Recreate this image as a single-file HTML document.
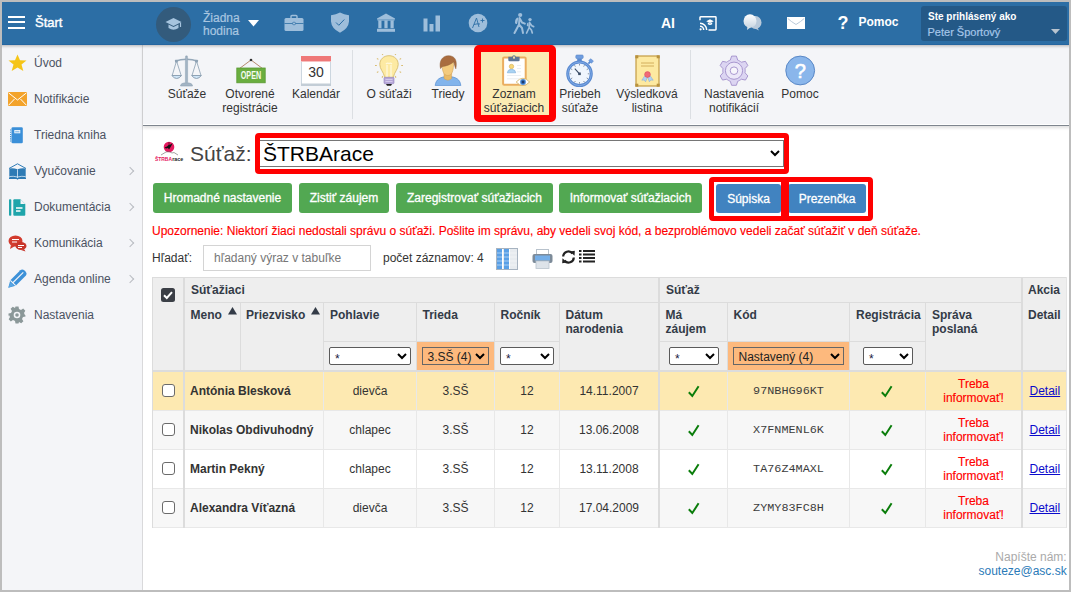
<!DOCTYPE html>
<html><head><meta charset="utf-8">
<style>
*{box-sizing:border-box;margin:0;padding:0}
html,body{width:1071px;height:592px;overflow:hidden;background:#fff;font-family:"Liberation Sans",sans-serif;position:relative}
.a{position:absolute}
#brd{position:absolute;left:0;top:0;width:1071px;height:592px;border:2px solid #bdbdbd;z-index:50;pointer-events:none}
#hdr{position:absolute;left:0;top:0;width:1071px;height:45px;background:#2c6ea5;border-bottom:1px solid #2566a0;box-shadow:0 1px 3px rgba(0,0,0,.28);z-index:5}
#side{position:absolute;left:0;top:45px;width:143px;height:547px;background:#f4f5f8;border-right:1px solid #d9d9db}
#tb{position:absolute;left:143px;top:45px;width:928px;height:81px;background:#f4f5f8;border-bottom:1px solid #7e858e;box-shadow:inset 0 -1px 0 #fff,0 2px 3px rgba(0,0,0,.13)}
.si{position:absolute;left:0;width:142px;height:36px;font-size:12px;color:#4b5262}
.si span{position:absolute;left:34px;top:11px}
.si svg{position:absolute;left:8px;top:9px}
.chev{position:absolute;left:127px;top:15px;width:6px;height:6px;border-right:1px solid #b9bcc2;border-top:1px solid #b9bcc2;transform:rotate(45deg)}
.ti{position:absolute;top:45px;height:80px;text-align:center;font-size:12px;color:#333;line-height:14px}
.ti .lbl{position:absolute;left:-10px;right:-10px;top:42px}
.ti svg{position:absolute;top:10px;left:50%;transform:translateX(-50%)}
.btn{position:absolute;top:183px;height:30px;border-radius:3px;color:#fff;font-size:12px;text-align:center;line-height:31px;white-space:nowrap;-webkit-text-stroke:0.3px #fff}
.g{background:#52a852}
.bl{background:#4183c0}
.red{position:absolute;border:5px solid #f00;border-radius:4px;z-index:20}
</style></head><body>
<div id="hdr">
  <div class="a" style="left:8px;top:16px;width:17px;height:2px;background:#fff"></div>
  <div class="a" style="left:8px;top:21px;width:17px;height:2px;background:#fff"></div>
  <div class="a" style="left:8px;top:27px;width:17px;height:2px;background:#fff"></div>
  <div class="a" style="left:35px;top:15px;font-size:13px;color:#fff;-webkit-text-stroke:0.4px #fff">Štart</div>
  <div class="a" style="left:156px;top:7px;width:35px;height:35px;border-radius:50%;background:#335b7c"></div>
  <svg class="a" style="left:165px;top:17px" width="17" height="15" viewBox="0 0 17 15"><path d="M8.5 1 L16.5 5 L8.5 9 L0.5 5 Z" fill="#a6c4de"/><path d="M3.5 7.5 V11 Q8.5 14.5 13.5 11 V7.5 L8.5 10 Z" fill="#a6c4de"/><path d="M15.5 5.5 V10" stroke="#a6c4de" stroke-width="1.2"/></svg>
  <div class="a" style="left:203px;top:11.5px;font-size:12px;line-height:13.7px;color:#a9c6e0;-webkit-text-stroke:0.2px #a9c6e0">Žiadna<br>hodina</div>
  <svg class="a" style="left:248px;top:19.5px" width="11" height="7" viewBox="0 0 11 7"><path d="M0 0H11L5.5 6.5Z" fill="#fff"/></svg>
  <!-- briefcase -->
  <svg class="a" style="left:284px;top:14px" width="20" height="18" viewBox="0 0 20 18"><path d="M7 4V2.5Q7 1.5 8 1.5H12Q13 1.5 13 2.5V4" fill="none" stroke="#9ebedb" stroke-width="1.4"/><rect x="0.5" y="4" width="19" height="13" rx="1.5" fill="#9ebedb"/><path d="M0.5 9.5H19.5" stroke="#2c6ea5" stroke-width="0.8"/><rect x="8.5" y="8.3" width="3" height="2.4" rx="1" fill="#9ebedb" stroke="#2c6ea5" stroke-width="0.7"/></svg>
  <!-- shield -->
  <svg class="a" style="left:330px;top:12px" width="20" height="21" viewBox="0 0 20 21"><path d="M10 0.6 Q14 2.8 19 3.2 V9.5 Q18.5 16.5 10 20.8 Q1.5 16.5 1 9.5 V3.2 Q6 2.8 10 0.6 Z" fill="#9ebedb"/><path d="M6 10.5 L8.8 13.3 L14.3 7.5" fill="none" stroke="#2c6ea5" stroke-width="1"/></svg>
  <!-- bank -->
  <svg class="a" style="left:376px;top:13px" width="20" height="19" viewBox="0 0 20 19"><path d="M10 0.6 L19 5.6 V6.6 H1 V5.6 Z" fill="#9ebedb"/><rect x="2.3" y="7.4" width="3.2" height="7.8" fill="#9ebedb"/><rect x="8.4" y="7.4" width="3.2" height="7.8" fill="#9ebedb"/><rect x="14.5" y="7.4" width="3.2" height="7.8" fill="#9ebedb"/><rect x="1.5" y="6.6" width="17" height="1" fill="#9ebedb"/><rect x="1" y="15.8" width="18" height="3" fill="#9ebedb"/></svg>
  <!-- chart -->
  <svg class="a" style="left:423px;top:15px" width="18" height="17" viewBox="0 0 18 17"><rect x="0.5" y="3.5" width="4" height="13" fill="#9ebedb"/><rect x="6.5" y="9" width="4" height="7.5" fill="#9ebedb"/><rect x="12.5" y="0.5" width="4.5" height="16" fill="#9ebedb"/></svg>
  <!-- A+ -->
  <svg class="a" style="left:468px;top:13px" width="20" height="20" viewBox="0 0 20 20"><circle cx="10" cy="10" r="9.3" fill="#9ebedb"/><path d="M4.5 15 L8.5 5 L11 14 M6 11.5 Q9 10.5 12 11" fill="none" stroke="#2c6ea5" stroke-width="0.9"/><path d="M12.5 7.5H16.5M14.5 5.5V9.5" stroke="#2c6ea5" stroke-width="0.9"/></svg>
  <!-- walking -->
  <svg class="a" style="left:512px;top:12px" width="23" height="22" viewBox="0 0 23 22"><circle cx="8.2" cy="3" r="2.1" fill="#9ebedb"/><path d="M7.5 6 L7 12.5 L2.5 21 M7 12.5 L10 16 L11 21 M7.8 6.5 L10 10.5 L12.8 11.6" fill="none" stroke="#9ebedb" stroke-width="2" stroke-linecap="round" stroke-linejoin="round"/><path d="M6 5.6 Q2.8 6.2 3 11 Q3.5 12.3 5 12 L6.3 6.5Z" fill="#9ebedb"/><circle cx="18" cy="7.6" r="1.7" fill="#9ebedb"/><path d="M17.6 10.3 L17.2 15.5 L14.6 21 M17.2 15.5 L19.4 18 L20.3 21 M17.8 11 L19.8 13.8 L21.6 14.6" fill="none" stroke="#9ebedb" stroke-width="1.7" stroke-linecap="round" stroke-linejoin="round"/><path d="M16.3 10.3 Q14.5 11 14.8 14 L16.8 14.5Z" fill="#9ebedb"/></svg>
  <div class="a" style="left:661px;top:15px;font-size:14px;font-weight:bold;color:#fff">AI</div>
  <!-- cast -->
  <svg class="a" style="left:699px;top:16px" width="18" height="15" viewBox="0 0 18 15"><path d="M1 4.2 V1.5 Q1 0.8 1.7 0.8 H16.3 Q17 0.8 17 1.5 V13.3 Q17 14 16.3 14 H9.5" fill="none" stroke="#fff" stroke-width="1.5"/><path d="M1 7.3 A6.7 6.7 0 0 1 7.7 14 M1 10.3 A3.7 3.7 0 0 1 4.7 14" fill="none" stroke="#fff" stroke-width="1.5"/><circle cx="1.6" cy="13.3" r="1.1" fill="#fff"/><path d="M11 3.3 L14.8 5.2 L11 7.1 L7.2 5.2Z M8.8 6.5 V8.3 Q11 9.8 13.2 8.3 V6.5 L11 7.6Z" fill="#fff"/></svg>
  <!-- chat -->
  <svg class="a" style="left:743px;top:14px" width="19" height="17" viewBox="0 0 19 17"><defs><linearGradient id="cg" x1="0" y1="0" x2="0" y2="1"><stop offset="0" stop-color="#fff"/><stop offset="1" stop-color="#c9d6e2"/></linearGradient></defs><ellipse cx="12.5" cy="8.5" rx="6" ry="6.5" fill="#b9cadb"/><path d="M14 13 L16 16.5 L12 14.5Z" fill="#b9cadb"/><ellipse cx="7" cy="7" rx="6.5" ry="6.8" fill="url(#cg)"/><path d="M4.5 12 L4 16 L8 13Z" fill="#d6e1ea"/></svg>
  <!-- envelope -->
  <svg class="a" style="left:787px;top:17px" width="18" height="12" viewBox="0 0 18 12"><rect x="0" y="0" width="18" height="12" fill="#fff"/><path d="M0.8 1.5 Q4 4.5 9 7.5 Q14 4.5 17.2 1.5" fill="none" stroke="#a9bdd0" stroke-width="0.8"/></svg>
  <div class="a" style="left:837.5px;top:13px;font-size:18px;font-weight:bold;color:#fff">?</div>
  <div class="a" style="left:858.5px;top:15px;font-size:12px;font-weight:bold;color:#fff">Pomoc</div>
  <div class="a" style="left:921px;top:6px;width:146px;height:35px;border-radius:3px;background:#245987"></div>
  <div class="a" style="left:928px;top:11px;font-size:10px;font-weight:bold;color:#fff">Ste prihlásený ako</div>
  <div class="a" style="left:927.5px;top:25.5px;font-size:11px;color:#a6c6e8;-webkit-text-stroke:0.2px #a6c6e8">Peter Športový</div>
  <svg class="a" style="left:1051px;top:29px" width="9" height="6" viewBox="0 0 9 6"><path d="M0 0H9L4.5 5Z" fill="#b8c4cf"/></svg>
</div>
<div id="side">
  <div class="si" style="top:0px"><svg width="19" height="18" viewBox="0 0 19 18"><path d="M9.5 0.5 L12 6.3 L18.5 6.6 L13.5 10.6 L15.3 17 L9.5 13.4 L3.7 17 L5.5 10.6 L0.5 6.6 L7 6.3Z" fill="#f5c518"/></svg><span>Úvod</span></div>
  <div class="si" style="top:36px"><svg width="19" height="14" viewBox="0 0 19 14" style="top:11px"><rect x="0" y="0" width="19" height="14" fill="#f3a32b"/><path d="M0.5 0.8 L9.5 8 L18.5 0.8 M0.5 13.3 L6.5 7 M18.5 13.3 L12.5 7" fill="none" stroke="#fff" stroke-width="1"/></svg><span>Notifikácie</span></div>
  <div class="si" style="top:72px"><svg width="14" height="17" viewBox="0 0 14 17" style="left:10px;top:10px"><rect x="1.5" y="0.3" width="11.3" height="16" rx="1.3" fill="#3a8fd8"/><rect x="4.3" y="3" width="6" height="3.3" fill="#fff" opacity=".92"/><rect x="5.2" y="3.9" width="4.2" height="1.5" fill="#3a8fd8" opacity=".5"/><path d="M0.6 2.5V15" stroke="#3a8fd8" stroke-width="1.1" stroke-dasharray="1.1 1.1"/></svg><span>Triedna kniha</span></div>
  <div class="si" style="top:108px"><svg width="19" height="17" viewBox="0 0 19 17" style="top:10px"><path d="M9.5 0.8 L1 5.5 M9.5 0.8 L18 5.5" stroke="#2e7bb5" stroke-width="1" fill="none"/><path d="M1.3 5.5 Q5 4.6 9.5 6.2 Q14 4.6 17.7 5.5 V15 H1.3Z" fill="#2e7bb5"/><path d="M9.5 6.3 V15.5" stroke="#cfe3f3" stroke-width=".9"/><path d="M1.3 13.6 Q5 12.8 9.5 14 Q14 12.8 17.7 13.6" stroke="#d9eaf6" stroke-width=".8" fill="none"/><path d="M1 15 H18 V16 H10.5 L9.5 16.8 L8.5 16 H1Z" fill="#2e7bb5"/></svg><span>Vyučovanie</span><div class="chev"></div></div>
  <div class="si" style="top:144px"><svg width="17" height="17" viewBox="0 0 17 17" style="left:9px;top:10px"><rect x="0" y="0.3" width="2.3" height="16.4" rx=".8" fill="#1fa5ab"/><path d="M4.3 1.3 Q4.3 0.3 5.3 0.3 H11.5 L16.3 5 V15.7 Q16.3 16.7 15.3 16.7 H5.3 Q4.3 16.7 4.3 15.7Z" fill="#1fa5ab"/><path d="M11.5 0.3 V5 H16.3Z" fill="#f4f5f8"/><path d="M7 9H13.5M7 12H11.5" stroke="#fff" stroke-width="1.3"/></svg><span>Dokumentácia</span><div class="chev"></div></div>
  <div class="si" style="top:180px"><svg width="19" height="17" viewBox="0 0 19 17" style="top:10px"><ellipse cx="7.5" cy="6" rx="7" ry="5.5" fill="#d23b2e"/><path d="M3 10 L2 14 L7 11Z" fill="#d23b2e"/><ellipse cx="13" cy="11" rx="5.5" ry="4" fill="#c8352a"/><path d="M16 14 L17.5 16.5 L13 15Z" fill="#c8352a"/><path d="M4 4.5H11M4 7H9" stroke="#fff" stroke-width="1.2"/><path d="M10 10.5H16M10 12.5H14" stroke="#fff" stroke-width="1"/></svg><span>Komunikácia</span><div class="chev"></div></div>
  <div class="si" style="top:216px"><svg width="19" height="19" viewBox="0 0 19 19" style="top:8px"><path d="M0.3 18.7 L2.3 11.3 L12.3 1.3 Q14.3 -0.5 16.5 1.5 L17.5 2.5 Q19.5 4.7 17.7 6.7 L7.7 16.7Z" fill="#3d91d8"/><path d="M4.6 14 L15.3 3.3 M2.3 11.3 L7.7 16.7" stroke="#f4f5f8" stroke-width="1.1"/><path d="M0.3 18.7 L2.6 13.2 L5.8 16.4Z" fill="#5aa6e3"/></svg><span>Agenda online</span><div class="chev"></div></div>
  <div class="si" style="top:252px"><svg width="18" height="18" viewBox="0 0 18 18"><path d="M7.5 0.5H10.5L11 3 L13 4 L15.2 2.6 L17.3 4.8 L16 7 L16.9 9 L17.5 9.5V10.5 L15 11 L14 13 L15.4 15.2 L13.2 17.3 L11 16 L10.5 17.5H7.5L7 15 L5 14 L2.8 15.4 L0.7 13.2 L2 11 L1 9 L0.5 10.5V7.5 L3 7 L4 5 L2.6 2.8 L4.8 0.7 L7 2Z" fill="#8b9899"/><circle cx="9" cy="9" r="3.3" fill="#f4f5f8"/><circle cx="9" cy="9" r="1.8" fill="#8b9899"/></svg><span>Nastavenia</span></div>
</div>
<div id="tb"></div>
<div class="a" style="left:352px;top:50px;width:1px;height:69px;background:#dcdfe3"></div>
<div class="a" style="left:690px;top:50px;width:1px;height:69px;background:#dcdfe3"></div>
<div class="a" style="left:481px;top:52px;width:68px;height:63px;background:#fcebb3"></div>
<!-- Sutaze scales -->
<svg class="a" style="left:171px;top:55px" width="32" height="32" viewBox="0 0 32 32">
 <path d="M5.5 6 L1.2 20.5 M5.5 6 L10.2 20.5 M25.5 6 L21 20.5 M25.5 6 L30 20.5" stroke="#95a8b9" stroke-width=".9" fill="none"/>
 <path d="M0.8 20.5 Q5.7 26.5 10.6 20.5Z" fill="#cfe5f7" stroke="#8ea2b4" stroke-width="1"/>
 <path d="M20.6 20.5 Q25.5 26.5 30.4 20.5Z" fill="#cfe5f7" stroke="#8ea2b4" stroke-width="1"/>
 <path d="M4 6.2 Q15.5 2.2 27 6.2" stroke="#95a8b9" stroke-width="1.5" fill="none"/>
 <rect x="4" y="4.8" width="2.8" height="2.8" rx=".5" fill="#8ea2b4"/><rect x="24" y="4.8" width="2.8" height="2.8" rx=".5" fill="#8ea2b4"/>
 <circle cx="15.5" cy="1.6" r="1.2" fill="#95a8b9"/>
 <path d="M14.4 2.5 H16.6 V27.5 H14.4Z" fill="#a3b4c4" stroke="#8ea2b4" stroke-width=".5"/>
 <path d="M9.5 31 Q9.5 27.8 15.5 27.8 Q21.5 27.8 21.5 31Z" fill="#a3b4c4" stroke="#8ea2b4" stroke-width=".6"/>
</svg>
<!-- OPEN sign -->
<svg class="a" style="left:236px;top:58px" width="30" height="26" viewBox="0 0 30 26">
 <path d="M3.5 10.5 L15 2 L26.5 10.5" stroke="#b58a6e" stroke-width="1" fill="none"/>
 <circle cx="15" cy="2" r="1.3" fill="#333"/>
 <rect x="0.8" y="10" width="28.4" height="14.8" fill="#6aae3f" stroke="#5a9a33" stroke-width=".8"/>
 <text x="15" y="21" text-anchor="middle" font-family="Liberation Sans" font-weight="bold" font-size="9" fill="#f4fbef" textLength="20.5" lengthAdjust="spacingAndGlyphs" transform="translate(0,-3.2) scale(1,1.15)">OPEN</text>
</svg>
<!-- calendar -->
<svg class="a" style="left:301px;top:56px" width="30" height="30" viewBox="0 0 30 30">
 <rect x="0.5" y="0.5" width="29" height="29" fill="#fff" stroke="#ccd6df" stroke-width="1"/>
 <rect x="0" y="0" width="30" height="5" fill="#ef7878"/>
 <rect x="0" y="5" width="30" height="1" fill="#f6c0c0"/>
 <rect x="0" y="27.5" width="30" height="2.5" fill="#c3cdd6"/>
 <text x="15" y="20.5" text-anchor="middle" font-family="Liberation Sans" font-size="14" fill="#333">30</text>
</svg>
<!-- bulb -->
<svg class="a" style="left:374px;top:54px" width="30" height="33" viewBox="0 0 30 33">
 <path d="M2.8 11.5L1.0 11.5 M27.2 11.5L29.0 11.5 M4.4 5.4L2.9 4.5 M25.6 5.4L27.1 4.5 M4.4 17.6L2.9 18.5 M25.6 17.6L27.1 18.5 M8.9 0.9L8.0 -0.6 M21.1 0.9L22.0 -0.6 M8.9 22.1L8.0 23.6 M21.1 22.1L22.0 23.6" stroke="#d9bd72" stroke-width="1.1"/>
 <path d="M15 1.7 C20.5 1.7 24.2 5.5 24.2 10.5 C24.2 15 20.5 18 19.5 22.5 V23.3 H10.5 V22.5 C9.5 18 5.8 15 5.8 10.5 C5.8 5.5 9.5 1.7 15 1.7Z" fill="#fdeaa3" stroke="#d7bd6c" stroke-width=".9"/>
 <path d="M13 23 V11 M17 23 V11 M12 10 Q13.5 8.5 15 9.5 Q16.5 8.5 18 10" stroke="#fff8dc" stroke-width="1.3" fill="none"/>
 <rect x="10" y="23.3" width="10" height="6.5" rx="1" fill="#b6a7d8" stroke="#9485bf" stroke-width=".6"/>
 <path d="M11.5 25.5H18.5M11.5 27.5H18.5" stroke="#ddd3f1" stroke-width=".8"/>
 <path d="M12 30 H18 L17 31.8 H13Z" fill="#222"/>
</svg>
<!-- person -->
<svg class="a" style="left:434px;top:55px" width="28" height="31" viewBox="0 0 28 31">
 <path d="M1.2 30.6 C1.8 24.5 6 21.6 14 21.6 C22 21.6 26.2 24.5 26.8 30.6Z" fill="#82b4ec" stroke="#6196d4" stroke-width=".8"/>
 <path d="M10 18 V23.5 Q14 26.8 17.6 23.5 V18Z" fill="#e9bb68" stroke="#cf9f55" stroke-width=".5"/>
 <path d="M8 6 C7.8 16 9.5 20.5 13.8 20.5 C18 20.5 19.8 16 19.6 6Z" fill="#f4cb7e" stroke="#d3a55c" stroke-width=".6"/>
 <path d="M6.5 13.5 C5 7 7.5 0.8 14.5 0.7 C21 0.8 23.5 5.5 21.8 13.8 C21 12 20.3 9 19.8 6.8 C17 9.5 12.5 11 8.2 11.6 C7.6 12.2 7 12.8 6.5 13.5Z" fill="#a96c3f" stroke="#8d5a33" stroke-width=".5"/>
</svg>
<!-- clipboard -->
<svg class="a" style="left:501px;top:55px" width="30" height="33" viewBox="0 0 30 33">
 <rect x="2.1" y="2.6" width="22.6" height="27.2" rx="1" fill="#fff" stroke="#eaae60" stroke-width="2"/>
 <path d="M7.3 1.8 H18.6 V5 Q18.6 6.2 17.4 6.2 H8.5 Q7.3 6.2 7.3 5Z" fill="#5d7596"/>
 <circle cx="13" cy="2" r="1.8" fill="#5d7596"/><ellipse cx="13" cy="2.6" rx="0.9" ry="1.3" fill="#f8e6a6"/>
 <circle cx="10.5" cy="11.5" r="2.2" fill="#f7d879" stroke="#d3ab4d" stroke-width=".6"/>
 <path d="M6.3 17.8 Q6.5 14.3 10.5 14.3 Q14.5 14.3 14.7 17.8Z" fill="#a9d3f3" stroke="#79a9d8" stroke-width=".6"/>
 <path d="M16 10.5H20M16 13.5H20M16 16.8H20M6 20.5H20M6 23.8H18" stroke="#e8ecf0" stroke-width=".9"/>
 <path d="M15.2 27 Q22 19.5 28.6 27 Q22 34.2 15.2 27Z" fill="#fff" stroke="#d2b46c" stroke-width=".9"/>
 <circle cx="22" cy="27" r="2.9" fill="#4f8ed8"/><circle cx="22" cy="27" r="1.9" fill="#2a5fa8"/><circle cx="22" cy="27" r="1" fill="#1b2f55"/>
</svg>
<!-- stopwatch -->
<svg class="a" style="left:565px;top:54px" width="30" height="34" viewBox="0 0 30 34">
 <rect x="10.8" y="1" width="7.4" height="3.6" rx="1" fill="#6f9de0" stroke="#5a88c8" stroke-width=".6"/>
 <rect x="12.2" y="4.4" width="4.6" height="2.6" fill="#5a8ad0"/>
 <g transform="rotate(45 25.5 7.5)"><rect x="23.6" y="5.2" width="3.8" height="3" rx=".5" fill="#6f9de0" stroke="#5a88c8" stroke-width=".5"/><rect x="24.5" y="8" width="2" height="2.5" fill="#5a8ad0"/></g>
 <circle cx="14.5" cy="19.8" r="11.8" fill="#f0f6fd" stroke="#5a8ad0" stroke-width="3"/>
 <circle cx="14.5" cy="19.8" r="11.8" fill="none" stroke="#7ea9e6" stroke-width="1"/>
 <path d="M14.50 11.50L14.50 9.90 M18.65 12.61L19.45 11.23 M21.69 15.65L23.07 14.85 M22.80 19.80L24.40 19.80 M21.69 23.95L23.07 24.75 M18.65 26.99L19.45 28.37 M14.50 28.10L14.50 29.70 M10.35 26.99L9.55 28.37 M7.31 23.95L5.93 24.75 M6.20 19.80L4.60 19.80 M7.31 15.65L5.93 14.85 M10.35 12.61L9.55 11.23" stroke="#7a8898" stroke-width=".9"/>
 <path d="M14.5 19.8 L9.8 14.6" stroke="#3a4d66" stroke-width="1.1"/>
 <rect x="13.2" y="18.5" width="2.6" height="2.6" fill="#3a4d66"/>
</svg>
<!-- certificate -->
<svg class="a" style="left:634.5px;top:55px" width="25" height="32" viewBox="0 0 25 32">
 <rect x="1" y="1" width="23" height="30" fill="#fde9a1" stroke="#c8a24e" stroke-width="1.3"/>
 <rect x="0.3" y="0.3" width="3" height="3" fill="#b8923e"/><rect x="21.7" y="0.3" width="3" height="3" fill="#b8923e"/><rect x="0.3" y="28.7" width="3" height="3" fill="#b8923e"/><rect x="21.7" y="28.7" width="3" height="3" fill="#b8923e"/>
 <path d="M6 8H19M6 11H19" stroke="#d3ae5c" stroke-width="1"/>
 <path d="M10 20.5 L6.8 25.2 L9.2 25 L10.6 26.8 L12.5 22Z M15 20.5 L18.2 25.2 L15.8 25 L14.4 26.8 L12.5 22Z" fill="#b3d2f2" stroke="#7aa7d8" stroke-width=".5"/>
 <circle cx="12.5" cy="19.5" r="2.9" fill="#f06a78" stroke="#d44b5a" stroke-width=".5"/>
</svg>
<!-- gear -->
<svg class="a" style="left:719px;top:55px" width="30" height="32" viewBox="0 0 30 32">
 <path d="M11.27 5.14 L12.61 1.09 L17.39 1.09 L18.73 5.14 L19.37 5.39 L19.99 5.67 L20.60 6.00 L21.18 6.36 L21.75 6.76 L22.28 7.19 L26.45 6.33 L28.84 10.47 L26.01 13.65 L26.12 14.33 L26.18 15.01 L26.20 15.70 L26.18 16.39 L26.12 17.07 L26.01 17.75 L28.84 20.93 L26.45 25.07 L22.28 24.21 L21.75 24.64 L21.18 25.04 L20.60 25.40 L19.99 25.73 L19.37 26.01 L18.73 26.26 L17.39 30.31 L12.61 30.31 L11.27 26.26 L10.63 26.01 L10.01 25.73 L9.40 25.40 L8.82 25.04 L8.25 24.64 L7.72 24.21 L3.55 25.07 L1.16 20.93 L3.99 17.75 L3.88 17.07 L3.82 16.39 L3.80 15.70 L3.82 15.01 L3.88 14.33 L3.99 13.65 L1.16 10.47 L3.55 6.33 L7.72 7.19 L8.25 6.76 L8.82 6.36 L9.40 6.00 L10.01 5.67 L10.63 5.39Z" fill="#dcd5f2" stroke="#a28fcb" stroke-width=".9" stroke-linejoin="round"/>
 <circle cx="15" cy="15.7" r="8.6" fill="#ece8f8" stroke="#a28fcb" stroke-width=".9"/>
 <circle cx="15" cy="15.7" r="3.8" fill="#f7f6fb" stroke="#a28fcb" stroke-width=".9"/>
</svg>
<!-- help -->
<svg class="a" style="left:785px;top:55px" width="31" height="31" viewBox="0 0 31 31">
 <circle cx="15.2" cy="15.5" r="14.4" fill="#8ab6eb" stroke="#5a88c6" stroke-width="1"/>
 <text x="15.3" y="22.5" text-anchor="middle" font-family="Liberation Sans" font-size="20" fill="#fff" stroke="#fff" stroke-width=".6">?</text>
</svg>
<div class="ti" style="left:157px;width:60px"><div class="lbl">Súťaže</div></div>
<div class="ti" style="left:220px;width:60px"><div class="lbl">Otvorené<br>registrácie</div></div>
<div class="ti" style="left:286px;width:60px"><div class="lbl">Kalendár</div></div>
<div class="ti" style="left:359px;width:60px"><div class="lbl">O súťaži</div></div>
<div class="ti" style="left:418px;width:60px"><div class="lbl">Triedy</div></div>
<div class="ti" style="left:484px;width:60px"><div class="lbl">Zoznam<br>súťažiacich</div></div>
<div class="ti" style="left:550px;width:60px"><div class="lbl">Priebeh<br>súťaže</div></div>
<div class="ti" style="left:617px;width:60px"><div class="lbl">Výsledková<br>listina</div></div>
<div class="ti" style="left:704px;width:60px"><div class="lbl">Nastavenia<br>notifikácií</div></div>
<div class="ti" style="left:770px;width:60px"><div class="lbl">Pomoc</div></div>
<div class="red" style="left:474px;top:45px;width:82px;height:77px;border-width:7px 7px 7px 7px;border-radius:5px"></div>
<!-- MAIN -->
<svg class="a" style="left:153px;top:140px" width="32" height="22" viewBox="0 0 32 22">
 <circle cx="16" cy="7" r="5.3" fill="#e5195f"/>
 <path d="M11.5 7.5 L14 6.5 L15.5 5 L17.5 4.5 L19.5 3 L18.5 5.5 L17 8 L16 9.5 L15 8 L13 8.5Z" fill="#111"/>
 <path d="M16 2 V5" stroke="#111" stroke-width=".5"/>
 <path d="M8 15 L13 12 L16 11.5 L19 13 L21 12.5 L25 15" stroke="#666" stroke-width=".6" fill="none"/>
 <text x="2" y="20.5" font-family="Liberation Sans" font-weight="bold" font-size="5" fill="#e5195f" textLength="17" lengthAdjust="spacingAndGlyphs">ŠTRBA</text>
 <text x="19.2" y="20.5" font-family="Liberation Sans" font-weight="bold" font-size="5" fill="#222" textLength="11" lengthAdjust="spacingAndGlyphs">race</text>
</svg>
<div class="a" style="left:190px;top:142px;font-size:21px;color:#444">Súťaž:</div>
<div class="a" style="left:257px;top:140px;width:527px;height:27px;border:1px solid #767676;background:#fff"></div>
<div class="a" style="left:263px;top:142px;font-size:21px;color:#000">ŠTRBArace</div>
<svg class="a" style="left:770px;top:150px" width="10" height="7" viewBox="0 0 10 7"><path d="M1 1 L5 5 L9 1" stroke="#000" stroke-width="2" fill="none"/></svg>
<div class="red" style="left:255px;top:133px;width:534px;height:41px"></div>

<div class="btn g" style="left:153px;width:139px">Hromadné nastavenie</div>
<div class="btn g" style="left:299px;width:90px">Zistiť záujem</div>
<div class="btn g" style="left:396px;width:157px">Zaregistrovať súťažiacich</div>
<div class="btn g" style="left:559px;width:143px">Informovať súťažiacich</div>
<div class="btn bl" style="left:716px;top:184px;width:65px;height:29px;line-height:31px">Súpiska</div>
<div class="btn bl" style="left:788px;top:184px;width:78px;height:29px;line-height:31px">Prezenčka</div>
<div class="red" style="left:709px;top:177px;width:164px;height:44px"></div>
<div class="a" style="left:781px;top:177px;width:7.5px;height:44px;background:#f00;z-index:21"></div>

<div class="a" style="left:152px;top:224px;font-size:12px;color:#f00;-webkit-text-stroke:0.15px #f00">Upozornenie: Niektorí žiaci nedostali správu o súťaži. Pošlite im správu, aby vedeli svoj kód, a bezproblémovo vedeli začať súťažiť v deň súťaže.</div>
<div class="a" style="left:152px;top:251px;font-size:12px;color:#333">Hľadať:</div>
<div class="a" style="left:203px;top:245px;width:168px;height:26px;border:1px solid #d4d4d4;background:#fff"></div>
<div class="a" style="left:214px;top:251px;font-size:12px;color:#777">hľadaný výraz v tabuľke</div>
<div class="a" style="left:383px;top:251px;font-size:12px;color:#333">počet záznamov: 4</div>
<svg class="a" style="left:496px;top:248px" width="22" height="22" viewBox="0 0 22 22">
 <rect x="0.5" y="0.5" width="21" height="21" fill="#e7ebef" stroke="#a7b3c0" stroke-width="1"/>
 <rect x="1" y="1" width="5" height="20" fill="#5aa0e6"/>
 <rect x="8" y="1" width="5" height="20" fill="#5aa0e6"/>
 <path d="M1 5H21M1 9H21M1 13H21M1 17H21" stroke="#fff" stroke-width=".7" opacity=".7"/>
 <path d="M6.5 1V21M13.5 1V21" stroke="#fff" stroke-width="1"/>
</svg>
<svg class="a" style="left:532px;top:249px" width="21" height="20" viewBox="0 0 21 20">
 <rect x="4.5" y="0.5" width="12" height="5" fill="#fff" stroke="#b8c2cc" stroke-width="1"/>
 <rect x="0.5" y="5" width="20" height="9" rx="2" fill="#7d8b99"/>
 <rect x="3" y="6.5" width="15" height="5" fill="#74aee8"/>
 <rect x="4" y="12" width="13" height="7.5" fill="#dde3e9" stroke="#b8c2cc" stroke-width=".8"/>
</svg>
<svg class="a" style="left:561px;top:250px" width="15" height="14" viewBox="0 0 15 14">
 <path d="M2.2 6.5 A5.2 5.2 0 0 1 11.5 3.5" stroke="#222" stroke-width="2.2" fill="none"/>
 <path d="M9 1.5 L13.8 0.8 L13.5 5.8Z" fill="#222"/>
 <path d="M12.8 7.5 A5.2 5.2 0 0 1 3.5 10.5" stroke="#222" stroke-width="2.2" fill="none"/>
 <path d="M6 12.5 L1.2 13.2 L1.5 8.2Z" fill="#222"/>
</svg>
<svg class="a" style="left:579px;top:249px" width="16" height="14" viewBox="0 0 16 14">
 <rect x="0" y="1" width="2.5" height="2" fill="#222"/><rect x="4" y="1" width="12" height="2" fill="#222"/>
 <rect x="0" y="4.5" width="2.5" height="2" fill="#222"/><rect x="4" y="4.5" width="12" height="2" fill="#222"/>
 <rect x="0" y="8" width="2.5" height="2" fill="#222"/><rect x="4" y="8" width="12" height="2" fill="#222"/>
 <rect x="0" y="11.5" width="2.5" height="2" fill="#222"/><rect x="4" y="11.5" width="12" height="2" fill="#222"/>
</svg>
<!-- TABLE -->
<div class="a" style="left:152px;top:277px;width:915px;height:95px;background:#eeeeee;"></div>
<div class="a" style="left:152px;top:277px;width:915px;height:1px;background:#dcdcdc;"></div>
<div class="a" style="left:152px;top:277px;width:1px;height:251px;background:#dcdcdc;"></div>
<div class="a" style="left:1066px;top:277px;width:1px;height:251px;background:#e4e4e4;"></div>
<div class="a" style="left:417px;top:342px;width:77px;height:28px;background:#fdb97d;"></div>
<div class="a" style="left:728px;top:342px;width:121px;height:28px;background:#fdb97d;"></div>
<div class="a" style="left:153px;top:372px;width:913px;height:38px;background:#fde9b1;"></div>
<div class="a" style="left:153px;top:411px;width:913px;height:38px;background:#f7f7f7;"></div>
<div class="a" style="left:153px;top:450px;width:913px;height:38px;background:#ffffff;"></div>
<div class="a" style="left:153px;top:489px;width:913px;height:38px;background:#f7f7f7;"></div>
<div class="a" style="left:185px;top:302px;width:473px;height:1px;background:#dcdcdc;"></div>
<div class="a" style="left:660px;top:302px;width:361px;height:1px;background:#dcdcdc;"></div>
<div class="a" style="left:324px;top:341px;width:235px;height:1px;background:#dcdcdc;"></div>
<div class="a" style="left:660px;top:341px;width:265px;height:1px;background:#dcdcdc;"></div>
<div class="a" style="left:153px;top:370px;width:913px;height:2px;background:#dcdcdc;"></div>
<div class="a" style="left:153px;top:410px;width:913px;height:1px;background:#e8e8e8;"></div>
<div class="a" style="left:153px;top:449px;width:913px;height:1px;background:#e8e8e8;"></div>
<div class="a" style="left:153px;top:488px;width:913px;height:1px;background:#e8e8e8;"></div>
<div class="a" style="left:153px;top:527px;width:913px;height:1px;background:#e8e8e8;"></div>
<div class="a" style="left:183px;top:277px;width:2px;height:251px;background:#dcdcdc;"></div>
<div class="a" style="left:658px;top:277px;width:2px;height:251px;background:#dcdcdc;"></div>
<div class="a" style="left:1021px;top:277px;width:2px;height:251px;background:#dcdcdc;"></div>
<div class="a" style="left:240px;top:303px;width:1px;height:67px;background:#dcdcdc;"></div>
<div class="a" style="left:323px;top:303px;width:1px;height:67px;background:#dcdcdc;"></div>
<div class="a" style="left:416px;top:303px;width:1px;height:67px;background:#dcdcdc;"></div>
<div class="a" style="left:494px;top:303px;width:1px;height:67px;background:#dcdcdc;"></div>
<div class="a" style="left:559px;top:303px;width:1px;height:67px;background:#dcdcdc;"></div>
<div class="a" style="left:727px;top:303px;width:1px;height:67px;background:#dcdcdc;"></div>
<div class="a" style="left:849px;top:303px;width:1px;height:67px;background:#dcdcdc;"></div>
<div class="a" style="left:925px;top:303px;width:1px;height:67px;background:#dcdcdc;"></div>
<div class="a" style="left:323px;top:372px;width:1px;height:155px;background:#e8e8e8;"></div>
<div class="a" style="left:416px;top:372px;width:1px;height:155px;background:#e8e8e8;"></div>
<div class="a" style="left:494px;top:372px;width:1px;height:155px;background:#e8e8e8;"></div>
<div class="a" style="left:559px;top:372px;width:1px;height:155px;background:#e8e8e8;"></div>
<div class="a" style="left:727px;top:372px;width:1px;height:155px;background:#e8e8e8;"></div>
<div class="a" style="left:849px;top:372px;width:1px;height:155px;background:#e8e8e8;"></div>
<div class="a" style="left:925px;top:372px;width:1px;height:155px;background:#e8e8e8;"></div>
<div class="a" style="left:161px;top:288px;"><svg width="14" height="14" viewBox="0 0 14 14"><rect x="0" y="0" width="14" height="14" rx="2.5" fill="#3b3f46"/><path d="M3 7.2 L5.8 10 L11 4.2" stroke="#fff" stroke-width="2" fill="none"/></svg></div>
<div class="a" style="left:191px;top:283px;font-size:12px;font-weight:bold;color:#333b47;line-height:14px">Súťažiaci</div>
<div class="a" style="left:666px;top:283px;font-size:12px;font-weight:bold;color:#333b47;line-height:14px">Súťaž</div>
<div class="a" style="left:1028px;top:283px;font-size:12px;font-weight:bold;color:#333b47;line-height:14px">Akcia</div>
<div class="a" style="left:190.5px;top:308px;font-size:12px;font-weight:bold;color:#333b47;line-height:14px">Meno</div>
<div class="a" style="left:246px;top:308px;font-size:12px;font-weight:bold;color:#333b47;line-height:14px">Priezvisko</div>
<svg class="a" style="left:227.5px;top:307px" width="9" height="8" viewBox="0 0 9 8"><path d="M0 7.5 L4.5 0 L9 7.5Z" fill="#333b47"/></svg>
<svg class="a" style="left:311px;top:307px" width="9" height="8" viewBox="0 0 9 8"><path d="M0 7.5 L4.5 0 L9 7.5Z" fill="#333b47"/></svg>
<div class="a" style="left:330px;top:308px;font-size:12px;font-weight:bold;color:#333b47;line-height:14px">Pohlavie</div>
<div class="a" style="left:422.5px;top:308px;font-size:12px;font-weight:bold;color:#333b47;line-height:14px">Trieda</div>
<div class="a" style="left:500.5px;top:308px;font-size:12px;font-weight:bold;color:#333b47;line-height:14px">Ročník</div>
<div class="a" style="left:565.5px;top:308px;font-size:12px;font-weight:bold;color:#333b47;line-height:14px">Dátum<br>narodenia</div>
<div class="a" style="left:665.5px;top:308px;font-size:12px;font-weight:bold;color:#333b47;line-height:14px">Má<br>záujem</div>
<div class="a" style="left:733.5px;top:308px;font-size:12px;font-weight:bold;color:#333b47;line-height:14px">Kód</div>
<div class="a" style="left:856px;top:308px;font-size:12px;font-weight:bold;color:#333b47;line-height:14px">Registrácia</div>
<div class="a" style="left:932px;top:308px;font-size:12px;font-weight:bold;color:#333b47;line-height:14px">Správa<br>poslaná</div>
<div class="a" style="left:1028px;top:308px;font-size:12px;font-weight:bold;color:#333b47;line-height:14px">Detail</div>
<div class="a" style="left:329px;top:347px;width:82px;height:18px;border:1px solid #5a5a5a;border-radius:2px;background:#fff"></div>
<div class="a" style="left:335px;top:351.5px;font-size:12px;color:#1a1a40;line-height:14px">*</div>
<svg class="a" style="left:397px;top:353px" width="10" height="7" viewBox="0 0 10 7"><path d="M1 1 L5 5 L9 1" stroke="#000" stroke-width="2" fill="none"/></svg>
<div class="a" style="left:422px;top:347px;width:67px;height:18px;border:1px solid #666;border-radius:0;background:#fdb97d"></div>
<div class="a" style="left:427.5px;top:349.5px;font-size:12px;color:#222;line-height:14px">3.SŠ (4)</div>
<svg class="a" style="left:475px;top:353px" width="10" height="7" viewBox="0 0 10 7"><path d="M1 1 L5 5 L9 1" stroke="#000" stroke-width="2" fill="none"/></svg>
<div class="a" style="left:500px;top:347px;width:54px;height:18px;border:1px solid #5a5a5a;border-radius:2px;background:#fff"></div>
<div class="a" style="left:506px;top:351.5px;font-size:12px;color:#1a1a40;line-height:14px">*</div>
<svg class="a" style="left:540px;top:353px" width="10" height="7" viewBox="0 0 10 7"><path d="M1 1 L5 5 L9 1" stroke="#000" stroke-width="2" fill="none"/></svg>
<div class="a" style="left:669px;top:347px;width:50px;height:18px;border:1px solid #5a5a5a;border-radius:2px;background:#fff"></div>
<div class="a" style="left:675px;top:351.5px;font-size:12px;color:#1a1a40;line-height:14px">*</div>
<svg class="a" style="left:705px;top:353px" width="10" height="7" viewBox="0 0 10 7"><path d="M1 1 L5 5 L9 1" stroke="#000" stroke-width="2" fill="none"/></svg>
<div class="a" style="left:733px;top:347px;width:111px;height:18px;border:1px solid #666;border-radius:0;background:#fdb97d"></div>
<div class="a" style="left:738.5px;top:349.5px;font-size:12px;color:#222;line-height:14px">Nastavený (4)</div>
<svg class="a" style="left:830px;top:353px" width="10" height="7" viewBox="0 0 10 7"><path d="M1 1 L5 5 L9 1" stroke="#000" stroke-width="2" fill="none"/></svg>
<div class="a" style="left:863px;top:347px;width:50px;height:18px;border:1px solid #5a5a5a;border-radius:2px;background:#fff"></div>
<div class="a" style="left:869px;top:351.5px;font-size:12px;color:#1a1a40;line-height:14px">*</div>
<svg class="a" style="left:899px;top:353px" width="10" height="7" viewBox="0 0 10 7"><path d="M1 1 L5 5 L9 1" stroke="#000" stroke-width="2" fill="none"/></svg>
<div class="a" style="left:162px;top:383.5px;width:13px;height:13px;border:1px solid #6b6b6b;border-radius:3px;background:#fff"></div>
<div class="a" style="left:190px;top:384px;font-size:12px;font-weight:bold;color:#333;line-height:14px;white-space:nowrap">Antónia Blesková</div>
<div class="a" style="left:324px;top:384px;font-size:12px;color:#333;line-height:14px;text-align:center;width:92px">dievča</div>
<div class="a" style="left:417px;top:384px;font-size:12px;color:#333;line-height:14px;text-align:center;width:77px">3.SŠ</div>
<div class="a" style="left:495px;top:384px;font-size:12px;color:#333;line-height:14px;text-align:center;width:64px">12</div>
<div class="a" style="left:560px;top:384px;font-size:12px;color:#333;line-height:14px;text-align:center;width:98px">14.11.2007</div>
<div class="a" style="left:728px;top:384px;font-family:'Liberation Mono',monospace;font-size:11.8px;color:#3c3c3c;line-height:15px;text-align:center;width:121px">97NBHG96KT</div>
<svg class="a" style="left:688px;top:384px" width="12" height="14" viewBox="0 0 12 14"><path d="M0.8 8.3 L4.3 12 L10.6 2.3" stroke="#0a7d0a" stroke-width="2" fill="none" stroke-linejoin="miter"/></svg>
<svg class="a" style="left:881px;top:384px" width="12" height="14" viewBox="0 0 12 14"><path d="M0.8 8.3 L4.3 12 L10.6 2.3" stroke="#0a7d0a" stroke-width="2" fill="none" stroke-linejoin="miter"/></svg>
<div class="a" style="left:926px;top:377px;font-size:12px;color:#f00;-webkit-text-stroke:0.15px #f00;line-height:14px;text-align:center;width:95px">Treba<br>informovať!</div>
<div class="a" style="left:1029.5px;top:384px;font-size:12px;color:#0a0acc;line-height:14px"><span style="text-decoration:underline">Detail</span></div>
<div class="a" style="left:162px;top:422.5px;width:13px;height:13px;border:1px solid #6b6b6b;border-radius:3px;background:#fff"></div>
<div class="a" style="left:190px;top:423px;font-size:12px;font-weight:bold;color:#333;line-height:14px;white-space:nowrap">Nikolas Obdivuhodný</div>
<div class="a" style="left:324px;top:423px;font-size:12px;color:#333;line-height:14px;text-align:center;width:92px">chlapec</div>
<div class="a" style="left:417px;top:423px;font-size:12px;color:#333;line-height:14px;text-align:center;width:77px">3.SŠ</div>
<div class="a" style="left:495px;top:423px;font-size:12px;color:#333;line-height:14px;text-align:center;width:64px">12</div>
<div class="a" style="left:560px;top:423px;font-size:12px;color:#333;line-height:14px;text-align:center;width:98px">13.06.2008</div>
<div class="a" style="left:728px;top:423px;font-family:'Liberation Mono',monospace;font-size:11.8px;color:#3c3c3c;line-height:15px;text-align:center;width:121px">X7FNMENL6K</div>
<svg class="a" style="left:688px;top:423px" width="12" height="14" viewBox="0 0 12 14"><path d="M0.8 8.3 L4.3 12 L10.6 2.3" stroke="#0a7d0a" stroke-width="2" fill="none" stroke-linejoin="miter"/></svg>
<svg class="a" style="left:881px;top:423px" width="12" height="14" viewBox="0 0 12 14"><path d="M0.8 8.3 L4.3 12 L10.6 2.3" stroke="#0a7d0a" stroke-width="2" fill="none" stroke-linejoin="miter"/></svg>
<div class="a" style="left:926px;top:416px;font-size:12px;color:#f00;-webkit-text-stroke:0.15px #f00;line-height:14px;text-align:center;width:95px">Treba<br>informovať!</div>
<div class="a" style="left:1029.5px;top:423px;font-size:12px;color:#0a0acc;line-height:14px"><span style="text-decoration:underline">Detail</span></div>
<div class="a" style="left:162px;top:461.5px;width:13px;height:13px;border:1px solid #6b6b6b;border-radius:3px;background:#fff"></div>
<div class="a" style="left:190px;top:462px;font-size:12px;font-weight:bold;color:#333;line-height:14px;white-space:nowrap">Martin Pekný</div>
<div class="a" style="left:324px;top:462px;font-size:12px;color:#333;line-height:14px;text-align:center;width:92px">chlapec</div>
<div class="a" style="left:417px;top:462px;font-size:12px;color:#333;line-height:14px;text-align:center;width:77px">3.SŠ</div>
<div class="a" style="left:495px;top:462px;font-size:12px;color:#333;line-height:14px;text-align:center;width:64px">12</div>
<div class="a" style="left:560px;top:462px;font-size:12px;color:#333;line-height:14px;text-align:center;width:98px">13.11.2008</div>
<div class="a" style="left:728px;top:462px;font-family:'Liberation Mono',monospace;font-size:11.8px;color:#3c3c3c;line-height:15px;text-align:center;width:121px">TA76Z4MAXL</div>
<svg class="a" style="left:688px;top:462px" width="12" height="14" viewBox="0 0 12 14"><path d="M0.8 8.3 L4.3 12 L10.6 2.3" stroke="#0a7d0a" stroke-width="2" fill="none" stroke-linejoin="miter"/></svg>
<svg class="a" style="left:881px;top:462px" width="12" height="14" viewBox="0 0 12 14"><path d="M0.8 8.3 L4.3 12 L10.6 2.3" stroke="#0a7d0a" stroke-width="2" fill="none" stroke-linejoin="miter"/></svg>
<div class="a" style="left:926px;top:455px;font-size:12px;color:#f00;-webkit-text-stroke:0.15px #f00;line-height:14px;text-align:center;width:95px">Treba<br>informovať!</div>
<div class="a" style="left:1029.5px;top:462px;font-size:12px;color:#0a0acc;line-height:14px"><span style="text-decoration:underline">Detail</span></div>
<div class="a" style="left:162px;top:500.5px;width:13px;height:13px;border:1px solid #6b6b6b;border-radius:3px;background:#fff"></div>
<div class="a" style="left:190px;top:501px;font-size:12px;font-weight:bold;color:#333;line-height:14px;white-space:nowrap">Alexandra Víťazná</div>
<div class="a" style="left:324px;top:501px;font-size:12px;color:#333;line-height:14px;text-align:center;width:92px">dievča</div>
<div class="a" style="left:417px;top:501px;font-size:12px;color:#333;line-height:14px;text-align:center;width:77px">3.SŠ</div>
<div class="a" style="left:495px;top:501px;font-size:12px;color:#333;line-height:14px;text-align:center;width:64px">12</div>
<div class="a" style="left:560px;top:501px;font-size:12px;color:#333;line-height:14px;text-align:center;width:98px">17.04.2009</div>
<div class="a" style="left:728px;top:501px;font-family:'Liberation Mono',monospace;font-size:11.8px;color:#3c3c3c;line-height:15px;text-align:center;width:121px">ZYMY83FC8H</div>
<svg class="a" style="left:688px;top:501px" width="12" height="14" viewBox="0 0 12 14"><path d="M0.8 8.3 L4.3 12 L10.6 2.3" stroke="#0a7d0a" stroke-width="2" fill="none" stroke-linejoin="miter"/></svg>
<svg class="a" style="left:881px;top:501px" width="12" height="14" viewBox="0 0 12 14"><path d="M0.8 8.3 L4.3 12 L10.6 2.3" stroke="#0a7d0a" stroke-width="2" fill="none" stroke-linejoin="miter"/></svg>
<div class="a" style="left:926px;top:494px;font-size:12px;color:#f00;-webkit-text-stroke:0.15px #f00;line-height:14px;text-align:center;width:95px">Treba<br>informovať!</div>
<div class="a" style="left:1029.5px;top:501px;font-size:12px;color:#0a0acc;line-height:14px"><span style="text-decoration:underline">Detail</span></div>
<div class="a" style="left:950px;top:550px;width:116.7px;text-align:right;font-size:12px;line-height:14px;color:#aaa">Napíšte nám:<br><span style="color:#2a7ab8">souteze@asc.sk</span></div>
<div id="brd"></div>
</body></html>
